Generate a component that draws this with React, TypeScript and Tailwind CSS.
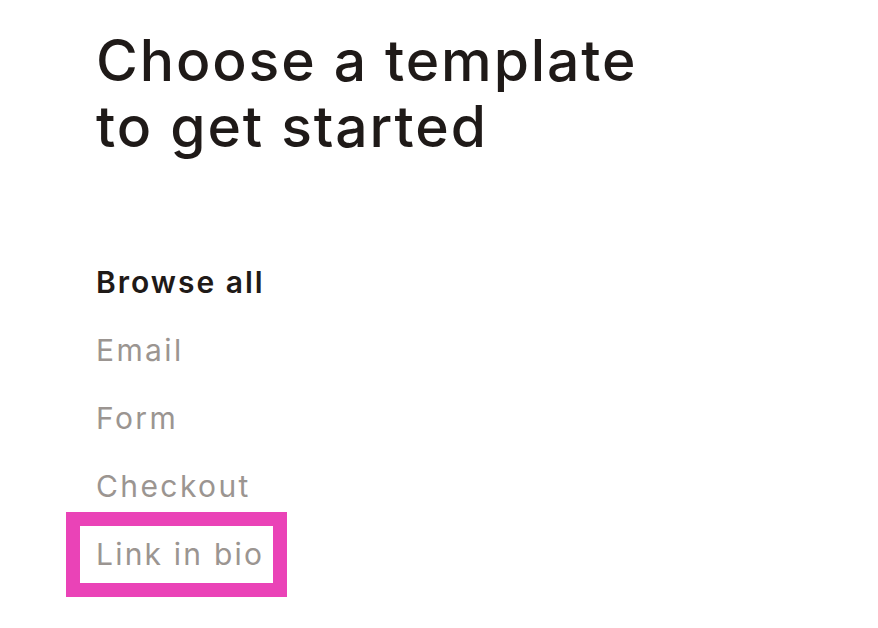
import React from 'react';

const items = ['Email', 'Form', 'Checkout'];

const App = () => {
  return (
    <div className="min-h-screen w-[878px] h-[628px] bg-white overflow-hidden font-['Inter',sans-serif]">
      <div className="pl-[96px] pt-[28px]">
        <h1 className="text-[57px] leading-[66px] font-medium tracking-[1.9px] text-[#1f1a18]">
          Choose a template
          <br />
          to get started
        </h1>

        <ul className="mt-[88px] flex flex-col">
          <li className="text-[30px] leading-[68px] font-semibold tracking-[2px] text-[#1f1a18]">Browse all</li>
          {items.map((item) => (
            <li key={item} className="text-[30px] leading-[68px] tracking-[2.4px] text-[#9b9591]">
              {item}
            </li>
          ))}
          <li className="text-[30px] leading-[68px] tracking-[2.2px] text-[#9b9591]">
            <span className="relative inline-block">
              Link in bio
              {/* highlight annotation */}
              <span className="absolute left-[-30px] top-[-8px] w-[221px] h-[85px] border-[14px] border-[#ea43b7]" />
            </span>
          </li>
        </ul>
      </div>
    </div>
  );
};

export default App;
